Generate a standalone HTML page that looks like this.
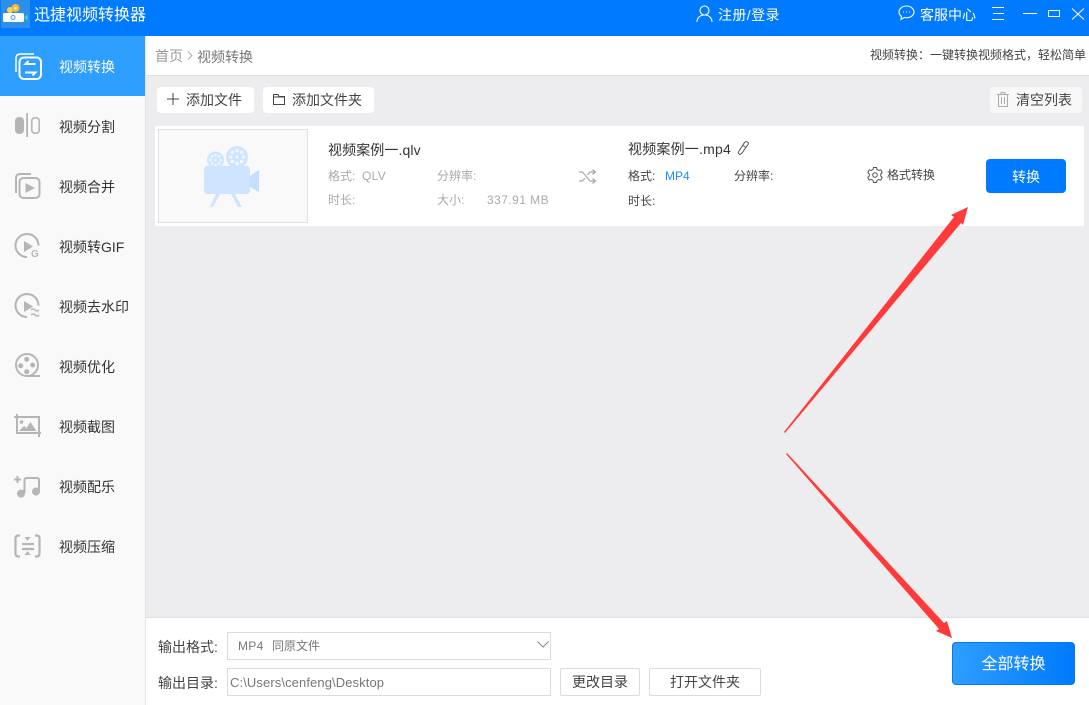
<!DOCTYPE html>
<html lang="zh"><head><meta charset="utf-8"><title>迅捷视频转换器</title>
<style>
*{box-sizing:border-box;margin:0;padding:0}
html,body{width:1089px;height:705px;overflow:hidden;background:#edecef;font-family:"Liberation Sans","Noto Sans CJK SC",sans-serif;color:#333}
.a{position:absolute;white-space:nowrap}
.btn{position:absolute;background:#fff;border-radius:4px}
.side{position:absolute;left:59px;font-size:14px;line-height:20px;color:#333;white-space:nowrap}
svg{position:absolute;overflow:visible}
</style></head><body>
<div class="a" style="left:0;top:0;width:1089px;height:36px;background:#007aff"></div>
<div class="a" style="left:1px;top:0;width:29px;height:28px;background:#2d8fe8"></div>
<svg style="left:0;top:0" width="34" height="30" viewBox="0 0 34 30">
<circle cx="10" cy="10" r="3" fill="#ffd24d"/><circle cx="15.500" cy="8" r="4" fill="#ffb52e"/><circle cx="15.500" cy="8" r="1.300" fill="#fff"/>
<rect x="3" y="13" width="21" height="9" rx="1.500" fill="#fff"/>
<circle cx="13" cy="17.500" r="2" fill="none" stroke="#4a9fe8"/>
<path d="M24.500 17l3-3v7l-3-3z" fill="#3fd0d0"/></svg>
<div class="a" style="left:34px;top:5px;font-size:16px;line-height:22px;color:#fff">迅捷视频转换器</div>

<svg style="left:696px;top:5px" width="18" height="18" viewBox="0 0 18 18" fill="none" stroke="#fff" stroke-width="1.100"><circle cx="8.500" cy="5.500" r="4.500"/><path d="M1 17c0-4 3-7 7.500-7s7.500 3 7.500 7"/></svg>
<div class="a" style="left:718px;top:5px;font-size:14px;line-height:20px;color:#fff;letter-spacing:.4px">注册/登录</div>
<svg style="left:898px;top:5px" width="17" height="16" viewBox="0 0 17 16" fill="none" stroke="#fff" stroke-width="1.100"><path d="M8.500 1C4.300 1 1 3.700 1 7c0 1.800 1 3.300 2.400 4.400L3 14.500l3.300-2c.7.200 1.400.2 2.200.2 4.200 0 7.500-2.600 7.500-5.700S12.700 1 8.500 1z"/><path d="M5.200 7h.8M8.100 7h.8M11 7h.8" stroke-width="1.300"/></svg>
<div class="a" style="left:920px;top:5px;font-size:14px;line-height:20px;color:#fff">客服中心</div>
<svg style="left:992px;top:7px" width="97" height="14" viewBox="0 0 97 14" fill="none" stroke="#fff" stroke-width="1"><path d="M0 .5h12M1 6.500h11M0 12.500h12"/><path d="M31 6.500h14"/><rect x="56.500" y="3.500" width="11" height="6"/><path d="M80 1.500l12 11M92 1.500l-12 11"/></svg>

<div class="a" style="left:0;top:36px;width:146px;height:669px;background:#f9f9f9;border-right:1px solid #e6e6e8"></div>
<div class="a" style="left:0;top:36px;width:145px;height:60px;background:#2e9eff"></div>
<div class="side" style="top:57px;color:#fff">视频转换</div>
<div class="side" style="top:117px">视频分割</div>
<div class="side" style="top:177px">视频合并</div>
<div class="side" style="top:237px">视频转GIF</div>
<div class="side" style="top:297px">视频去水印</div>
<div class="side" style="top:357px">视频优化</div>
<div class="side" style="top:417px">视频截图</div>
<div class="side" style="top:477px">视频配乐</div>
<div class="side" style="top:537px">视频压缩</div>

<svg style="left:15px;top:53px" width="27" height="27" viewBox="0 0 27 27" fill="none" stroke="#fff" stroke-width="1.500"><path d="M1 19V5.500C1 2.500 2.500 1 5.500 1H19"/><rect x="4.500" y="4.500" width="21.500" height="21.500" rx="4.500" stroke-width="2"/><path d="M20.500 11H10.500l3-3M10 19.500h10.500l-3 3" stroke-width="2"/></svg>
<svg style="left:15px;top:113px" width="25" height="25" viewBox="0 0 25 25"><rect x="0" y="4" width="9" height="17" rx="4" fill="#b5b5b5"/><rect x="11.200" y="0" width="1.800" height="24" fill="#b5b5b5"/><rect x="16.800" y="4.800" width="7.400" height="15.400" rx="3" fill="none" stroke="#b5b5b5" stroke-width="1.600"/></svg>
<svg style="left:15px;top:173px" width="26" height="26" viewBox="0 0 26 26" fill="none" stroke="#b5b5b5" stroke-width="2"><path d="M1 20V5C1 2.500 2.500 1 5 1h11"/><rect x="4.500" y="5" width="20" height="20" rx="4"/><path d="M10.500 10l9.500 5-9.500 5z" fill="#b5b5b5" stroke="none"/></svg>
<svg style="left:15px;top:233px" width="25" height="26" viewBox="0 0 25 26" fill="none" stroke="#b5b5b5" stroke-width="2"><path d="M12 24a11.500 11.500 0 1 1 11.500-11.500"/><path d="M9 8l9 5.500-9 5.500z" fill="#b5b5b5" stroke="none"/><text x="16" y="24" font-size="10" font-weight="700" fill="#b5b5b5" stroke="none" font-family="Liberation Sans">G</text></svg>
<svg style="left:15px;top:293px" width="26" height="26" viewBox="0 0 26 26" fill="none" stroke="#b5b5b5" stroke-width="2"><path d="M12 24a11.500 11.500 0 1 1 11.500-11.500"/><path d="M9 8l9 5.500-9 5.500z" fill="#b5b5b5" stroke="none"/><path d="M16 17q2-2 4 0t4 0M16 22q2-2 4 0t4 0" stroke-width="1.500"/></svg>
<svg style="left:15px;top:353px" width="26" height="26" viewBox="0 0 26 26" fill="none" stroke="#b5b5b5" stroke-width="2"><circle cx="12" cy="12" r="11"/><path d="M12 23h13"/><g fill="#b5b5b5" stroke="none"><circle cx="11.700" cy="6.300" r="2.500"/><circle cx="5.700" cy="12.700" r="2.500"/><circle cx="17.700" cy="12" r="2.500"/><circle cx="11.700" cy="18.700" r="2.500"/></g></svg>
<svg style="left:14px;top:414px" width="27" height="23" viewBox="0 0 27 23" fill="none" stroke="#b5b5b5" stroke-width="2"><path d="M3 0V19H27M0 3H25V23"/><circle cx="7.500" cy="8" r="1.800" fill="#b5b5b5" stroke="none"/><path d="M5 17l5-5 2.500 2 4-6 6 9z" fill="#b5b5b5" stroke="none"/></svg>
<svg style="left:14px;top:476px" width="27" height="24" viewBox="0 0 27 24" fill="none" stroke="#b5b5b5" stroke-width="2"><path d="M0 3.500h7M3.500 0v7"/><path d="M10.500 17V4Q10.500 2 13 2H23Q25 2 25 4V15" /><circle cx="7" cy="17.500" r="4" fill="#b5b5b5" stroke="none"/><circle cx="22" cy="15.500" r="4" fill="#b5b5b5" stroke="none"/></svg>
<svg style="left:14px;top:534px" width="27" height="24" viewBox="0 0 27 24" fill="none" stroke="#b5b5b5" stroke-width="2.200"><path d="M6 1.500H4.500Q1.500 1.500 1.500 4.500v15q0 3 3 3H6M21 1.500h1.500q3 0 3 3v15q0 3-3 3H21"/><path d="M8 10h12M8 15h12" stroke-width="2.200"/><path d="M10.500 3h6l-3 4zM10.500 21h6l-3-4z" fill="#b5b5b5" stroke="none"/></svg>

<div class="a" style="left:146px;top:36px;width:943px;height:40px;background:#fff;border-bottom:1px solid #dfdfe2"></div>
<div class="a" style="left:155px;top:46px;font-size:14px;line-height:20px;color:#999">首页</div>
<svg style="left:187px;top:51px" width="6" height="9" viewBox="0 0 6 9" fill="none" stroke="#aaa"><path d="M1 .5l4 4-4 4"/></svg>
<div class="a" style="left:197px;top:47px;font-size:14px;line-height:20px;color:#777">视频转换</div>
<div class="a" style="left:870px;top:46px;font-size:12px;line-height:18px;color:#444">视频转换：一键转换视频格式，轻松简单</div>

<div class="btn" style="left:157px;top:87px;width:97px;height:26px"></div>
<svg style="left:167px;top:93px" width="12" height="12" viewBox="0 0 12 12" stroke="#444" stroke-width="1"><path d="M6 0v12M0 6h12"/></svg>
<div class="a" style="left:186px;top:90px;font-size:14px;line-height:20px;color:#444">添加文件</div>
<div class="btn" style="left:263px;top:87px;width:111px;height:26px"></div>
<svg style="left:273px;top:94px" width="12" height="11" viewBox="0 0 12 11" fill="none" stroke="#444"><path d="M.5 10.500V.5h4.500l1 2h5.500v8zM.5 3h11"/></svg>
<div class="a" style="left:292px;top:90px;font-size:14px;line-height:20px;color:#444">添加文件夹</div>
<div class="btn" style="left:990px;top:87px;width:92px;height:26px;background:#f8f8f8"></div>
<svg style="left:997px;top:92px" width="13" height="15" viewBox="0 0 13 15" fill="none" stroke="#aaa"><path d="M0 2.500h12M4 2.500V.5h4v2M1.500 2.500v12h9v-12M4.500 5v7M7.500 5v7"/></svg>
<div class="a" style="left:1016px;top:90px;font-size:14px;line-height:20px;color:#444">清空列表</div>

<div class="a" style="left:155px;top:126px;width:929px;height:100px;background:#fff"></div>
<div class="a" style="left:158px;top:129px;width:150px;height:94px;background:#f9f9f9;border:1px solid #e2e2e2"></div>
<svg style="left:204px;top:146px" width="56" height="62" viewBox="0 0 56 62">
<g fill="#cfe5ff"><circle cx="11.500" cy="14" r="8.500"/><circle cx="33" cy="11" r="11"/></g>
<g fill="#f3f8ff"><circle cx="11.500" cy="14" r="1.200"/><circle cx="33" cy="11" r="1.500"/>
<circle cx="11.500" cy="9" r="1.300"/><circle cx="11.500" cy="19" r="1.300"/><circle cx="6.500" cy="14" r="1.300"/><circle cx="16.500" cy="14" r="1.300"/><circle cx="8" cy="10.500" r="1.300"/><circle cx="15" cy="10.500" r="1.300"/><circle cx="8" cy="17.500" r="1.300"/><circle cx="15" cy="17.500" r="1.300"/>
<circle cx="33" cy="4.500" r="1.700"/><circle cx="33" cy="17.500" r="1.700"/><circle cx="26.500" cy="11" r="1.700"/><circle cx="39.500" cy="11" r="1.700"/><circle cx="28.400" cy="6.400" r="1.700"/><circle cx="37.600" cy="6.400" r="1.700"/><circle cx="28.400" cy="15.600" r="1.700"/><circle cx="37.600" cy="15.600" r="1.700"/></g>
<rect x="0" y="20" width="46" height="28" rx="3" fill="#cfe5ff"/>
<path d="M46 30l9-6v22l-9-5z" fill="#c3deff"/>
<path d="M12 48h4l-7 13H6zM31 48h-4l7 13h4z" fill="#cfe5ff"/></svg>

<div class="a" style="left:328px;top:140px;font-size:14px;line-height:20px;color:#333;letter-spacing:.1px">视频案例一.qlv</div>
<div class="a" style="left:328px;top:167px;font-size:12px;line-height:18px;color:#aaa">格式:</div>
<div class="a" style="left:362px;top:167px;font-size:12px;line-height:18px;color:#aaa;letter-spacing:.3px">QLV</div>
<div class="a" style="left:437px;top:167px;font-size:12px;line-height:18px;color:#aaa">分辨率:</div>
<div class="a" style="left:328px;top:191px;font-size:12px;line-height:18px;color:#aaa">时长:</div>
<div class="a" style="left:437px;top:191px;font-size:12px;line-height:18px;color:#aaa">大小:</div>
<div class="a" style="left:487px;top:191px;font-size:12px;line-height:18px;color:#aaa;letter-spacing:.45px">337.91 MB</div>
<svg style="left:579px;top:169px" width="17" height="15" viewBox="0 0 17 15" fill="none" stroke="#aaa" stroke-width="1.200"><path d="M0 3h3.500l7.500 9h5M0 12h3.500l2.500-3M8.500 6L11 3h5M13.500 .5L16.500 3l-3 2.500M13.500 9.500l3 2.500-3 2.500"/></svg>

<div class="a" style="left:628px;top:139px;font-size:14px;line-height:20px;color:#333;letter-spacing:.2px">视频案例一.mp4</div>
<svg style="left:737px;top:141px" width="12" height="15" viewBox="0 0 12 15" fill="none" stroke="#555"><path d="M7.500 1.500Q9 0 10.500 1t.500 2.500L5 12q-2 2-3 1t0-3zM6 4.500l3 2"/></svg>
<div class="a" style="left:628px;top:167px;font-size:12px;line-height:18px;color:#444">格式:</div>
<div class="a" style="left:665px;top:167px;font-size:12px;line-height:18px;color:#1a8cff">MP4</div>
<div class="a" style="left:734px;top:167px;font-size:12px;line-height:18px;color:#444">分辨率:</div>
<div class="a" style="left:628px;top:192px;font-size:12px;line-height:18px;color:#444">时长:</div>
<svg style="left:867px;top:167px" width="16" height="16" viewBox="0 0 16 16" fill="none" stroke="#555"><path d="M6.500 .5h3l.5 2 1.700 1 2-.6 1.500 2.600-1.500 1.500v2l1.500 1.500-1.500 2.600-2-.6-1.700 1-.5 2h-3l-.5-2-1.700-1-2 .6L.8 10.500 2.300 9V7L.8 5.500l1.500-2.600 2 .6 1.700-1z"/><circle cx="8" cy="8" r="2.300"/></svg>
<div class="a" style="left:887px;top:166px;font-size:12px;line-height:18px;color:#444">格式转换</div>
<div class="a" style="left:986px;top:159px;width:80px;height:34px;background:#007aff;border-radius:4px;color:#fff;font-size:14px;line-height:37px;text-align:center">转换</div>

<div class="a" style="left:146px;top:617px;width:943px;height:88px;background:#fff;border-top:1px solid #dfdfe2"></div>
<div class="a" style="left:158px;top:637px;font-size:14px;line-height:20px;color:#444">输出格式:</div>
<div class="a" style="left:227px;top:632px;width:324px;height:28px;background:#fff;border:1px solid #dcdcdc"></div>
<div class="a" style="left:238px;top:637px;font-size:12px;line-height:18px;color:#777;letter-spacing:.3px">MP4</div>
<div class="a" style="left:272px;top:637px;font-size:12px;line-height:18px;color:#777">同原文件</div>
<svg style="left:537px;top:641px" width="12" height="7" viewBox="0 0 12 7" fill="none" stroke="#888"><path d="M.5.500l5.500 5.500 5.500-5.500"/></svg>
<div class="a" style="left:158px;top:673px;font-size:14px;line-height:20px;color:#444">输出目录:</div>
<div class="a" style="left:227px;top:668px;width:324px;height:28px;background:#fff;border:1px solid #dcdcdc"></div>
<div class="a" style="left:230px;top:674px;font-size:13px;line-height:18px;color:#777;letter-spacing:.1px">C:\Users\cenfeng\Desktop</div>
<div class="a" style="left:560px;top:668px;width:80px;height:28px;background:#fff;border:1px solid #dcdcdc;border-radius:2px;font-size:14px;line-height:26px;text-align:center;color:#444">更改目录</div>
<div class="a" style="left:649px;top:668px;width:112px;height:28px;background:#fff;border:1px solid #dcdcdc;border-radius:2px;font-size:14px;line-height:26px;text-align:center;color:#444">打开文件夹</div>
<div class="a" style="left:952px;top:642px;width:123px;height:43px;background:linear-gradient(90deg,#2e9eff,#007aff);border:1px solid #0a78ea;border-radius:4px;color:#fff;font-size:16px;line-height:44px;text-align:center">全部转换</div>

<svg style="left:0;top:0" width="1089" height="705" viewBox="0 0 1089 705">
<path d="M784 432L954 217 951 215 968 207 963 225 961 223 785 433z" fill="#ff3a3a"/>
<path d="M787 453L944 623 947 621 952 638 936 631 939 629 786 454z" fill="#ff3a3a"/>
</svg>
</body></html>
